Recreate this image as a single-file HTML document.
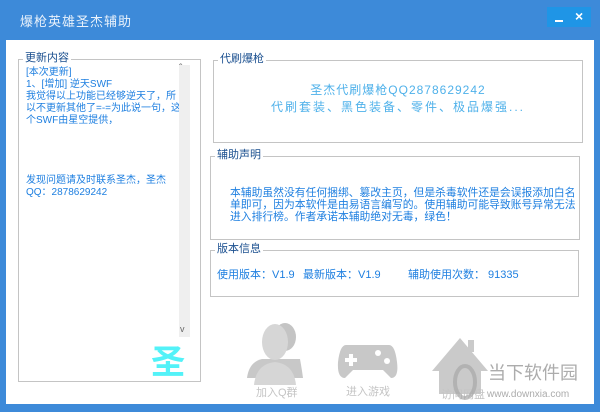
<!DOCTYPE html>
<html><head><meta charset="utf-8"><style>
*{margin:0;padding:0;box-sizing:border-box}
body{width:600px;height:412px;overflow:hidden;background:#3d8ad9;font-family:"Liberation Sans","Noto Sans CJK SC",sans-serif;position:relative}
.t{position:absolute;left:20px;top:11px;color:#e8f1fb;font-size:13px;letter-spacing:1px}
.btns{position:absolute;left:547px;top:7px;width:44px;height:20px;background:#1f95e6}
.panel{position:absolute;left:6px;top:40px;width:588px;height:364px;background:#fff}
.gb{position:absolute;border:1px solid #c4c4c4}
.gb .lg{position:absolute;left:4px;top:-9px;background:#fff;padding:0 2px;font-size:11px;color:#1a4f8f;line-height:14px}
.blue{color:#1e7fe0;font-size:11px;line-height:12px;position:absolute}
.cy{color:#4fb1ea;position:absolute;font-size:12px;letter-spacing:1px;text-align:center;width:100%}
</style></head><body>
<div class="t">爆枪英雄圣杰辅助</div>
<div class="btns"><div style="position:absolute;left:8px;top:13px;width:8px;height:2px;background:#fff"></div><div style="position:absolute;left:28px;top:1px;color:#fff;font-size:14px;font-weight:bold">×</div></div>
<div class="panel"></div>
<div class="gb" style="left:18px;top:59px;width:183px;height:323px"><div class="lg">更新内容</div>
<div class="blue" style="left:7px;top:7px;width:155px;font-size:10px">[本次更新]<br>1、[增加] 逆天SWF<br>我觉得以上功能已经够逆天了，所以不更新其他了=-=为此说一句，这个SWF由星空提供，<br><br><br><br><br>发现问题请及时联系圣杰，圣杰QQ：2878629242</div>
<div style="position:absolute;left:160px;top:5px;width:11px;height:272px;background:#efefef"></div>
<div style="position:absolute;left:160px;top:3px;color:#666;font-size:10px">ˆ</div>
<div style="position:absolute;left:161px;top:264px;color:#666;font-size:9px">v</div>
<div style="position:absolute;left:132px;top:275px;color:#53f2f8;font-size:34px;font-weight:bold">圣</div>
</div>
<div class="gb" style="left:213px;top:60px;width:370px;height:83px"><div class="lg">代刷爆枪</div>
<div class="cy" style="top:20px">圣杰代刷爆枪QQ2878629242</div>
<div class="cy" style="top:37px;letter-spacing:2px">代刷套装、黑色装备、零件、极品爆强...</div></div>
<div class="gb" style="left:210px;top:156px;width:370px;height:84px"><div class="lg">辅助声明</div>
<div class="blue" style="left:19px;top:30px;width:350px;font-size:10.8px">本辅助虽然没有任何捆绑、篡改主页，但是杀毒软件还是会误报添加白名单即可，因为本软件是由易语言编写的。使用辅助可能导致账号异常无法进入排行榜。作者承诺本辅助绝对无毒，绿色！</div></div>
<div class="gb" style="left:210px;top:250px;width:369px;height:47px"><div class="lg">版本信息</div>
<div class="blue" style="left:6px;top:18px">使用版本：V1.9</div>
<div class="blue" style="left:92px;top:18px">最新版本：V1.9</div>
<div class="blue" style="left:197px;top:18px">辅助使用次数：</div>
<div class="blue" style="left:277px;top:18px">91335</div></div>
<svg style="position:absolute;left:0;top:0" width="600" height="412">
<g>
<ellipse cx="285" cy="337" rx="11" ry="14" fill="#c4c4c4"/>
<path d="M247 378 Q249 362 262 359 L300 359 Q302 370 303 378Z" fill="#c8c8c8"/>
<ellipse cx="275" cy="342" rx="13" ry="18" fill="#d6d6d6"/>
<path d="M254 385 Q256 364 275 362 Q294 364 296 385Z" fill="#d6d6d6"/>
<path d="M346 345 Q340 345 338 362 Q337 378 345 378 L353 370 L383 370 L391 378 Q399 378 397 362 Q395 345 389 345Z" fill="#c8c8c8"/>
<rect x="345" y="358" width="12" height="4" fill="#fff"/><rect x="349" y="354" width="4" height="12" fill="#fff"/>
<circle cx="378" cy="353" r="3" fill="#fff"/><circle cx="387" cy="361" r="3" fill="#fff"/>
<path d="M432 371 L460 338 L488 371 L481 371 L481 394 L439 394 L439 371Z" fill="#cacaca"/>
<rect x="468" y="340" width="6" height="12" fill="#cacaca"/>
</g>
<text x="256" y="396" font-size="11" fill="#c4c4c4" font-family="Liberation Sans,Noto Sans CJK SC,sans-serif">加入Q群</text>
<text x="346" y="395" font-size="11" fill="#c4c4c4" font-family="Liberation Sans,Noto Sans CJK SC,sans-serif">进入游戏</text>
<text x="441" y="398" font-size="11" fill="#c4c4c4" font-family="Liberation Sans,Noto Sans CJK SC,sans-serif">访问网盘</text>
<ellipse cx="465" cy="382" rx="10" ry="16" fill="none" stroke="#a8a8a8" stroke-width="4" opacity=".7"/>
<text x="488" y="379" font-size="18" fill="#acacac" font-family="Noto Sans CJK SC,sans-serif">当下软件园</text>
<text x="487" y="397" font-size="10" fill="#acacac" font-family="Liberation Sans,sans-serif">www.downxia.com</text>
</svg>
</body></html>
